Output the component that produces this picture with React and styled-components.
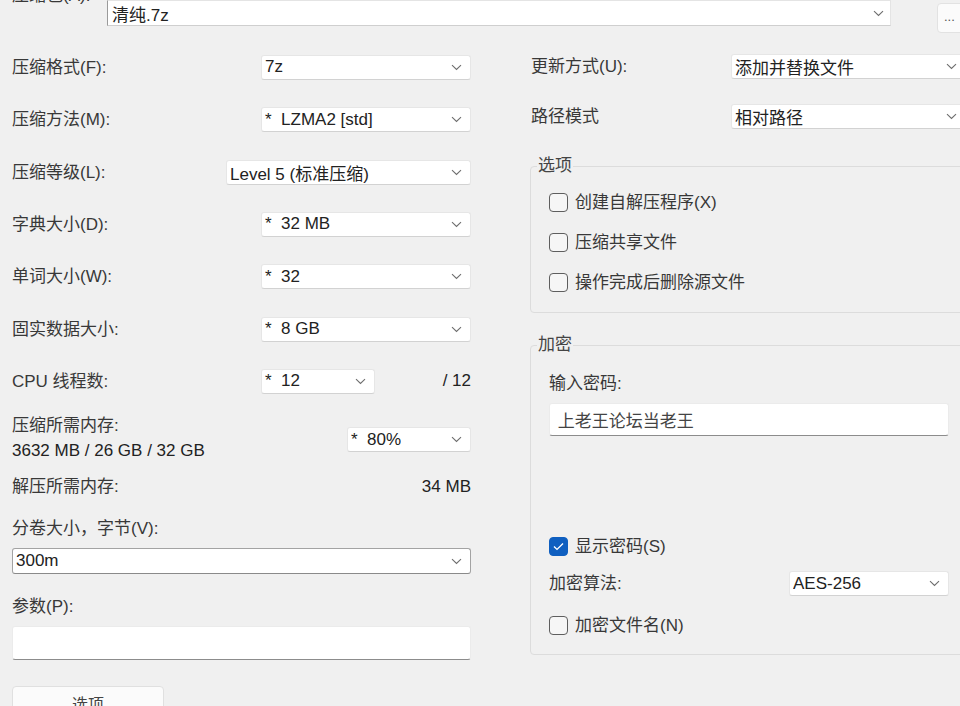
import React from 'react';
import styled, { createGlobalStyle } from 'styled-components';

const Global = createGlobalStyle`
  html, body { margin: 0; padding: 0; background: #f0f0f0; overflow: hidden; }
  body {
    width: 960px; height: 706px;
    font-family: "Liberation Sans", "Noto Sans CJK SC", sans-serif;
    font-size: 17px; color: #383838;
  }
`;

const Page = styled.div`
  width: 960px;
  height: 706px;
  overflow: hidden;
  padding-left: 12px;
  box-sizing: border-box;
`;

const TopRow = styled.div`
  display: flex;
  align-items: flex-start;
  height: 41px;
  margin-top: -14px;
`;

const TopLabel = styled.div`
  width: 95px;
  flex-shrink: 0;
  line-height: 20px;
  white-space: nowrap;
  overflow: hidden;
`;

const TopCombo = styled.div`
  margin-top: 14px;
  width: 784px;
  height: 26px;
  flex-shrink: 0;
  box-sizing: border-box;
  background: #fff;
  border: 1px solid #e4e4e4;
  border-left-color: #9a9a9a;
  border-bottom-color: #cfcfcf;
  display: flex;
  align-items: center;
  justify-content: space-between;
  padding: 0 6px 0 4px;
`;

const DotsButton = styled.div`
  margin-top: 17px;
  margin-left: 46px;
  width: 50px;
  height: 30px;
  flex-shrink: 0;
  box-sizing: border-box;
  background: #fbfbfb;
  border: 1px solid #e2e2e2;
  border-radius: 4px;
  font-size: 13px;
  color: #555;
  padding-left: 6px;
  line-height: 26px;
`;

const Columns = styled.div`
  display: grid;
  grid-template-columns: 459px 437px;
  column-gap: 60px;
  margin-top: 14.3px;
`;

const Col = styled.div`
  display: flex;
  flex-direction: column;
  min-width: 0;
`;

const Row = styled.div`
  display: flex;
  align-items: center;
  justify-content: space-between;
  height: ${p => p.$h || 52.33}px;
  margin-top: ${p => p.$mt || 0}px;
  flex-shrink: 0;
`;

const Label = styled.span`
  white-space: nowrap;
  line-height: 25px;
`;

const Drop = styled.div`
  width: ${p => p.$w}px;
  height: ${p => p.$h || 25}px;
  margin-top: ${p => p.$mt || 0}px;
  margin-right: ${p => p.$mr || 0}px;
  flex-shrink: 0;
  box-sizing: border-box;
  background: #fff;
  border: 1px solid ${p => (p.$strong ? '#a3a3a3' : '#e6e6e6')};
  border-bottom-color: ${p => (p.$strong ? '#8a8a8a' : '#d2d2d2')};
  border-radius: 3px;
  display: flex;
  align-items: center;
  justify-content: space-between;
  padding: 0 8px 0 3px;
  color: #222;
`;

const DropText = styled.span`
  white-space: pre;
  overflow: hidden;
`;

const Chevron = () => (
  <svg width="11" height="7" viewBox="0 0 11 7" fill="none">
    <path d="M1 1.2 L5.5 5.5 L10 1.2" stroke="#6e6e6e" strokeWidth="1.1" />
  </svg>
);

const Select = ({ w, value, ...rest }) => (
  <Drop $w={w} {...rest}>
    <DropText>{value}</DropText>
    <Chevron />
  </Drop>
);

const CpuGroup = styled.div`
  width: 210px;
  display: flex;
  align-items: center;
  justify-content: space-between;
`;

const MemRow = styled.div`
  display: flex;
  justify-content: space-between;
  align-items: flex-start;
  margin-top: 5px;
`;

const Lines = styled.div`
  display: flex;
  flex-direction: column;
  line-height: 25px;
`;

const Dark = styled.span`
  color: #222;
`;

const Line = styled.div`
  display: flex;
  justify-content: space-between;
  line-height: 25px;
  margin-top: ${p => p.$mt || 0}px;
`;

const TextInput = styled.div`
  width: ${p => (p.$w ? `${p.$w}px` : '100%')};
  height: ${p => p.$h}px;
  margin-top: ${p => p.$mt || 0}px;
  box-sizing: border-box;
  background: #fff;
  border: 1px solid #ebebeb;
  border-bottom: 1px solid #8c8c8c;
  border-radius: 3px;
  display: flex;
  align-items: center;
  padding-left: 3px;
  color: #444;
`;

const OptButton = styled.div`
  margin-top: 26px;
  width: 152px;
  height: 32px;
  box-sizing: border-box;
  background: #fbfbfb;
  border: 1px solid #e0e0e0;
  border-radius: 4px;
  display: flex;
  align-items: center;
  justify-content: center;
  padding-top: 2px;
  color: #444;
  font-size: 16px;
`;

const Group = styled.fieldset`
  margin: ${p => p.$mt}px 0 0 -1px;
  padding: 0 0 ${p => p.$pb}px 0;
  width: 438px;
  box-sizing: border-box;
  min-width: 0;
  border: 1px solid #dcdcdc;
  border-radius: 4px;
`;

const Legend = styled.legend`
  margin-left: 6px;
  padding: 0 1px;
  line-height: 20px;
  color: #444;
`;

const GroupBody = styled.div`
  display: flex;
  flex-direction: column;
  padding: ${p => p.$pt || 0}px 18px 0 18px;
`;

const CheckRow = styled.div`
  display: flex;
  align-items: center;
  gap: 7px;
  height: ${p => p.$h || 40}px;
  margin-top: ${p => p.$mt || 0}px;
  flex-shrink: 0;
`;

const Box = styled.div`
  width: 19px;
  height: 19px;
  box-sizing: border-box;
  border-radius: 4px;
  border: 1px solid ${p => (p.$on ? '#0f5fc0' : '#5e5e5e')};
  background: ${p => (p.$on ? '#0f5fc0' : '#f6f6f6')};
  display: flex;
  align-items: center;
  justify-content: center;
`;

const Check = ({ on, children, ...rest }) => (
  <CheckRow {...rest}>
    <Box $on={on}>
      {on && (
        <svg width="11" height="9" viewBox="0 0 11 9" fill="none">
          <path d="M1 4.6 L4 7.4 L10 1.4" stroke="#fff" strokeWidth="1.4" />
        </svg>
      )}
    </Box>
    <Label>{children}</Label>
  </CheckRow>
);

export default function App() {
  return (
    <>
      <Global />
      <Page>
        <TopRow>
          <TopLabel>压缩包(A):</TopLabel>
          <TopCombo>
            <Dark>清纯.7z</Dark>
            <Chevron />
          </TopCombo>
          <DotsButton>...</DotsButton>
        </TopRow>

        <Columns>
          <Col>
            <Row>
              <Label>压缩格式(F):</Label>
              <Select w={210} value="7z" />
            </Row>
            <Row>
              <Label>压缩方法(M):</Label>
              <Select w={210} value="*  LZMA2 [std]" />
            </Row>
            <Row>
              <Label>压缩等级(L):</Label>
              <Select w={245} value="Level 5 (标准压缩)" />
            </Row>
            <Row>
              <Label>字典大小(D):</Label>
              <Select w={210} value="*  32 MB" />
            </Row>
            <Row>
              <Label>单词大小(W):</Label>
              <Select w={210} value="*  32" />
            </Row>
            <Row>
              <Label>固实数据大小:</Label>
              <Select w={210} value="*  8 GB" />
            </Row>
            <Row>
              <Label>CPU 线程数:</Label>
              <CpuGroup>
                <Select w={114} value="*  12" />
                <Dark>/ 12</Dark>
              </CpuGroup>
            </Row>
            <MemRow>
              <Lines>
                <span>压缩所需内存:</span>
                <Dark>3632 MB / 26 GB / 32 GB</Dark>
              </Lines>
              <Select w={124} value="*  80%" $mt={14.5} />
            </MemRow>
            <Line $mt={11}>
              <span>解压所需内存:</span>
              <Dark>34 MB</Dark>
            </Line>
            <Line $mt={17}>
              <span>分卷大小，字节(V):</span>
            </Line>
            <Select w={459} $h={26} $mt={7.5} $strong value="300m" />
            <Line $mt={19.5}>
              <span>参数(P):</span>
            </Line>
            <TextInput $h={34} $mt={7.5} />
            <OptButton>选项</OptButton>
          </Col>

          <Col>
            <Row $h={50}>
              <Label>更新方式(U):</Label>
              <Select w={235} $mr={2} value="添加并替换文件" />
            </Row>
            <Row $h={50}>
              <Label>路径模式</Label>
              <Select w={235} $mr={2} value="相对路径" />
            </Row>

            <Group $mt={15} $pb={10}>
              <Legend>选项</Legend>
              <GroupBody $pt={6}>
                <Check>创建自解压程序(X)</Check>
                <Check>压缩共享文件</Check>
                <Check>操作完成后删除源文件</Check>
              </GroupBody>
            </Group>

            <Group $mt={22} $pb={13}>
              <Legend>加密</Legend>
              <GroupBody $pt={16}>
                <Label>输入密码:</Label>
                <TextInput $h={33} $mt={6.5}>&nbsp;上老王论坛当老王</TextInput>
                <Check on $h={30} $mt={96}>显示密码(S)</Check>
                <Row $h={30} $mt={7}>
                  <Label>加密算法:</Label>
                  <Select w={160} value="AES-256" />
                </Row>
                <Check $h={30} $mt={12}>加密文件名(N)</Check>
              </GroupBody>
            </Group>
          </Col>
        </Columns>
      </Page>
    </>
  );
}
